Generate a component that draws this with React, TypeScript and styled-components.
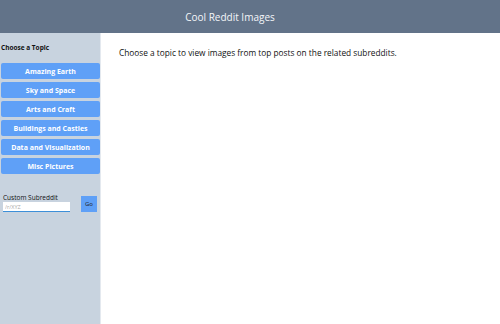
import styled, { createGlobalStyle } from "styled-components";

const topics = [
  "Amazing Earth",
  "Sky and Space",
  "Arts and Craft",
  "Buildings and Castles",
  "Data and Visualization",
  "Misc Pictures",
];

const GlobalStyle = createGlobalStyle`
  html, body, #root {
    margin: 0;
    height: 100%;
  }
  body {
    font-family: "Open Sans", "Liberation Sans", sans-serif;
    background: #ffffff;
  }
`;

const App = () => {
  return (
    <Page>
      <GlobalStyle />
      <Header>
        <Title>Cool Reddit Images</Title>
      </Header>
      <Body>
        <Sidebar>
          <SideHeading>Choose a Topic</SideHeading>
          <TopicList>
            {topics.map((topic) => (
              <TopicButton key={topic}>{topic}</TopicButton>
            ))}
          </TopicList>
          <CustomRow>
            <CustomField>
              <CustomLabel>Custom Subreddit</CustomLabel>
              <CustomInput placeholder="/r/XYZ" />
            </CustomField>
            <GoButton>Go</GoButton>
          </CustomRow>
        </Sidebar>
        <Main>
          <Intro>
            Choose a topic to view images from top posts on the related
            subreddits.
          </Intro>
        </Main>
      </Body>
    </Page>
  );
};

const Page = styled.div`
  display: flex;
  flex-direction: column;
  height: 100%;
`;

const Header = styled.header`
  height: 33px;
  background-color: #627389;
  display: flex;
  align-items: center;
  justify-content: center;
  padding-right: 40px;
`;

const Title = styled.h1`
  margin: 0;
  font-size: 10px;
  font-weight: 400;
  color: #f4f6f9;
`;

const Body = styled.div`
  flex: 1;
  display: flex;
`;

const Sidebar = styled.aside`
  width: 100px;
  background-color: #c8d3df;
  border-right: 1px solid #e4e9ef;
  display: flex;
  flex-direction: column;
`;

const SideHeading = styled.div`
  font-size: 6.5px;
  font-weight: 700;
  color: #111;
  padding: 10px 0 0 1px;
  height: 20px;
`;

const TopicList = styled.div`
  display: flex;
  flex-direction: column;
  gap: 3px;
  padding-left: 1px;
`;

const TopicButton = styled.button`
  height: 16px;
  border: none;
  border-radius: 2px;
  background-color: #5fa0f7;
  color: #fff;
  font-family: inherit;
  font-size: 7px;
  font-weight: 700;
  padding: 0;
  cursor: pointer;
`;

const CustomRow = styled.div`
  display: flex;
  align-items: flex-end;
  gap: 11px;
  padding: 19px 0 0 3px;
`;

const CustomField = styled.div`
  display: flex;
  flex-direction: column;
  gap: 0;
`;

const CustomLabel = styled.label`
  font-size: 6.5px;
  color: #111;
`;

const CustomInput = styled.input`
  width: 67px;
  height: 10px;
  box-sizing: border-box;
  border: none;
  border-bottom: 1px solid #3d8fd8;
  padding: 0 2px;
  font-size: 5.5px;
  font-family: inherit;
  background: #fff;
  &::placeholder {
    color: #aaa;
  }
`;

const GoButton = styled.button`
  width: 16px;
  height: 16px;
  border: none;
  background-color: #5fa0f7;
  color: #222;
  font-size: 6px;
  line-height: 16px;
  font-family: inherit;
  padding: 0;
  text-align: center;
  overflow: hidden;
`;

const Main = styled.main`
  flex: 1;
  padding: 14px 0 0 18px;
`;

const Intro = styled.p`
  margin: 0;
  font-size: 8.3px;
  color: #111;
`;

export default App;
